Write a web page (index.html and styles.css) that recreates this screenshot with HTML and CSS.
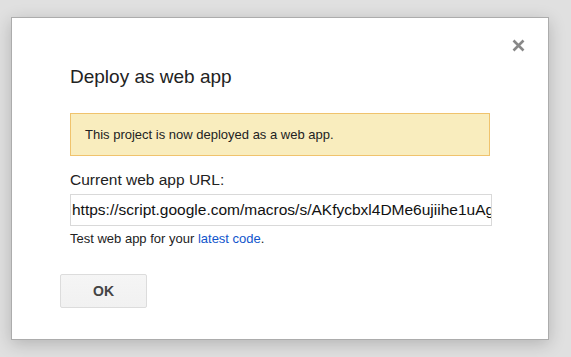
FILE: index.html
```html
<!DOCTYPE html>
<html>
<head>
<meta charset="utf-8">
<link rel="stylesheet" href="styles.css">
</head>
<body>
<div class="dialog">
  <button class="close" aria-label="Close">
    <svg width="13" height="13" viewBox="0 0 13 13"><path d="M1.5 1.5 L11.5 11.5 M11.5 1.5 L1.5 11.5" stroke="#888" stroke-width="2.6" stroke-linecap="butt"/></svg>
  </button>
  <div class="content">
    <div class="title">Deploy as web app</div>
    <div class="notice">This project is now deployed as a web app.</div>
    <div class="label">Current web app URL:</div>
    <div class="url">https://script.google.com/macros/s/AKfycbxl4DMe6ujiihe1uAgPq8Lw2mX0vZ/exec</div>
    <div class="hint">Test web app for your <a href="#">latest code</a>.</div>
  </div>
  <div class="buttons">
    <button class="ok">OK</button>
  </div>
</div>
</body>
</html>
```

FILE: styles.css
```css
html, body {
  margin: 0;
  padding: 0;
}
body {
  background: #e0e0e0;
  font-family: Arial, "Liberation Sans", sans-serif;
  color: #222;
  width: 571px;
  height: 357px;
  overflow: hidden;
  padding-top: 17px;
  padding-left: 11px;
  box-sizing: border-box;
}
.dialog {
  position: relative;
  width: 538px;
  height: 323px;
  box-sizing: border-box;
  background: #fff;
  border: 1px solid #acacac;
  box-shadow: 0 4px 16px rgba(0,0,0,0.2);
  padding-top: 48px;
}
.close {
  position: absolute;
  top: 21px;
  right: 23px;
  width: 13px;
  height: 13px;
  padding: 0;
  border: 0;
  background: transparent;
  display: flex;
}
.content {
  padding-left: 58px;
  width: 422px;
}
.title {
  font-size: 19px;
  line-height: 22px;
  color: #222;
}
.notice {
  margin-top: 25px;
  width: 420px;
  box-sizing: border-box;
  background: #f9edbe;
  border: 1px solid #f0c36d;
  padding: 12px 14px;
  font-size: 13px;
  line-height: 17px;
  color: #222;
}
.label {
  margin-top: 15px;
  font-size: 15.5px;
  line-height: 18px;
}
.url {
  margin-top: 5px;
  width: 422px;
  height: 32px;
  box-sizing: border-box;
  border: 1px solid #d9d9d9;
  padding: 6px 1px;
  font-size: 15.5px;
  line-height: 18px;
  white-space: nowrap;
  overflow: hidden;
  color: #111;
}
.hint {
  margin-top: 5px;
  font-size: 13px;
  line-height: 15px;
}
.hint a {
  color: #15c;
  text-decoration: none;
}
.buttons {
  padding-left: 48px;
  margin-top: 28px;
}
.ok {
  width: 87px;
  height: 34px;
  box-sizing: border-box;
  border: 1px solid #dcdcdc;
  border-radius: 2px;
  background: linear-gradient(#f5f5f5, #f1f1f1);
  font-family: Arial, "Liberation Sans", sans-serif;
  font-weight: bold;
  font-size: 14px;
  color: #444;
  padding: 0;
}
```
